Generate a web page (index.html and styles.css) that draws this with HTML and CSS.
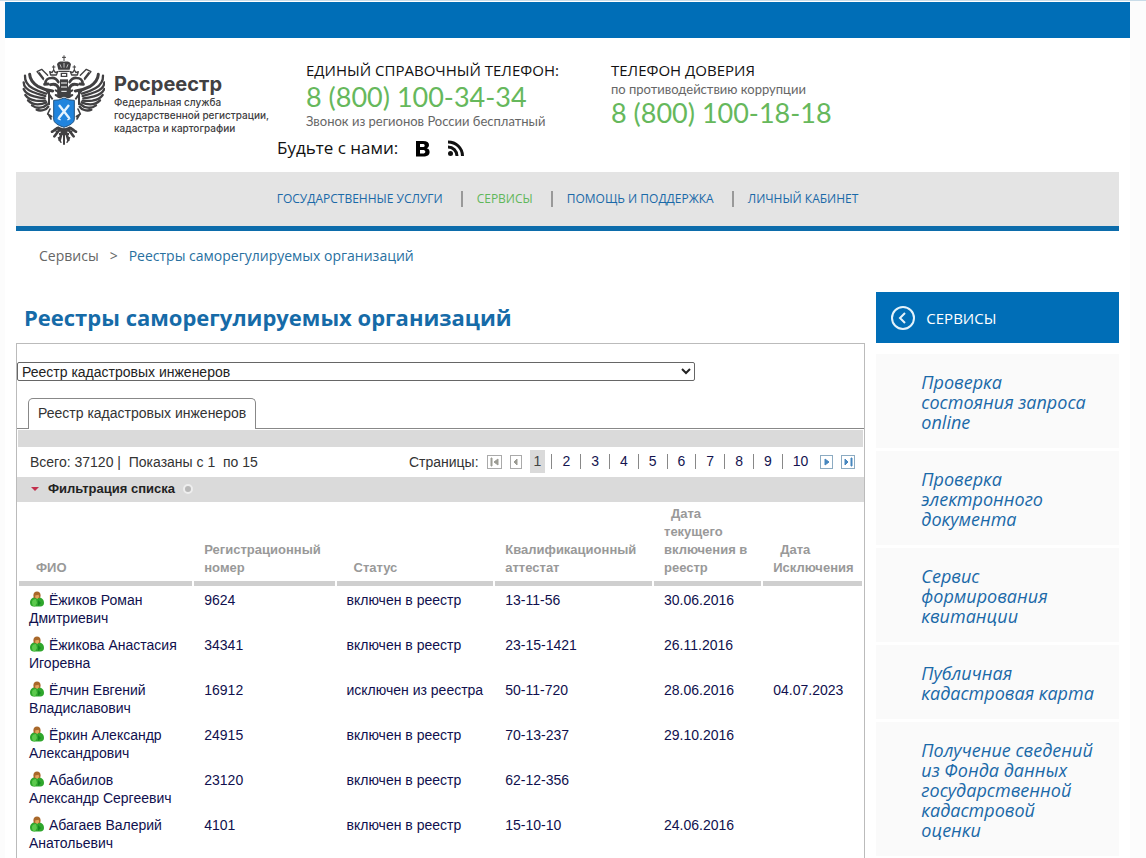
FILE: index.html
```html
<!DOCTYPE html>
<html lang="ru">
<head>
    <meta charset="UTF-8">
    <meta name="viewport" content="width=device-width, initial-scale=1.0">
    <title>Реестры саморегулируемых организаций</title>
    <link rel="stylesheet" href="styles.css">
</head>
<body>
    <!-- shared icons -->
    <svg class="sprite" aria-hidden="true">
        <defs>
            <symbol id="person" viewBox="0 0 16 16">
                <path d="M1 11.5C1 8 3.500 6 8 6s7 2.500 7 6c0 2-1.500 3.500-3.500 3.500h-7C2.500 15.500 1 14 1 11.500z" fill="#2fa62c"/>
                <path d="M3 11c0-2 2-3 4-3l1 4-2 3.500H5C3.500 15 3 13 3 11z" fill="#5cc94d"/>
                <path d="M9 9l3 3-3 3z" fill="#168a20"/>
                <path d="M8 .5c2.200 0 3.600 1.600 3.600 3.800 0 1.700-.4 2.400-1 3.200L8.500 6 5.500 7.500C4.700 6.600 4.400 5.800 4.400 4.300 4.400 2.100 5.800.5 8 .5z" fill="#a9682a"/>
                <path d="M6.200 4.500l3.400-.7.600 2.200L8.300 8 6.300 6.800z" fill="#e3a45c"/>
            </symbol>
            <g id="wing" fill="none" stroke="#414042" stroke-linecap="round" stroke-linejoin="round">
                <path d="M41 73c1 17 13 29 26 37 13 7 26 12 43 13" stroke-width="9"/>
                <path d="M27 77c-1 17 9 30 23 38 12 7 23 12 40 16" stroke-width="7"/>
                <path d="M23 97c0 14 11 23 27 29 13 5 24 8 38 12" stroke-width="7"/>
                <path d="M23 117c5 12 15 18 31 22 11 3 21 5 32 6" stroke-width="7"/>
                <path d="M28 135c7 10 18 15 31 17 11 1 20 1 29 0" stroke-width="7"/>
                <path d="M36 151c8 8 18 12 29 12 10 0 18-2 26-6" stroke-width="7"/>
                <path d="M48 166c8 6 15 8 24 7 9-1 16-4 22-10" stroke-width="7"/>
                <path d="M62 179c8 4 14 3 21 1 7-2 11-5 14-10" stroke-width="7"/>
                <path d="M91 121l18 26M99 125v38" stroke-width="6"/>
                <path d="M82 89L63 65l14-7 18 18M70 68l13 17" stroke-width="4"/>
                <path d="M88 101c0-10 8-17 18-17 10-1 17 5 21 12" stroke-width="8"/>
                <path d="M86 103l10-1M104 104c12-4 20 1 24 10v25" stroke-width="9"/>
                <path d="M119 121l22 13M119 135l22 12" stroke-width="6"/>
                <path d="M104 75h17l4-10-7 3-5-8-5 8-7-3z" stroke-width="4"/>
                <path d="M113 47v12M109 51h8" stroke-width="3"/>
                <path d="M102 177l-7 15 13 8M97 193l8 14" stroke-width="5"/>
                <path d="M129 233c-9 2-14 9-21 12M137 234c-9 5-15 18-22 25M143 237c-5 7-8 19-12 33" stroke-width="8"/>
                <path d="M115 238l10 10M127 263l8 14" stroke-width="4"/>
            </g>
        </defs>
    </svg>

    <div class="page">
        <div class="top-bar"></div>

        <header class="header">
            <a class="logo" href="#">
                <svg class="emblem" viewBox="15 12 252 276" aria-hidden="true">
                    <use href="#wing"/>
                    <use href="#wing" transform="translate(288 0) scale(-1 1)"/>
                    <path d="M144 16v17M138 22h12" stroke="#414042" stroke-width="3"/>
                    <path d="M127 59l-4-16c2-9 14-9 21-8 7-1 19-1 21 8l-4 16z" fill="#414042"/>
                    <path d="M132 43l4 10M144 39v14M156 43l-4 10" stroke="#fff" stroke-width="2"/>
                    <path d="M127 64h34M136 70h16v9h-16z" stroke="#414042" stroke-width="4" fill="none"/>
                    <path d="M132 88h24v58h-24z" fill="#414042"/>
                    <path d="M135 99h18M135 111h18M136 124h16" stroke="#fff" stroke-width="3"/>
                    <path d="M113 151q16 1 31-7 15 8 31 7v58q-1 13-31 23-30-10-31-23z" fill="#247fd7" stroke="#fff" stroke-width="7"/>
                    <path d="M113 151q16 1 31-7 15 8 31 7v58q-1 13-31 23-30-10-31-23z" fill="#2184dd" stroke="#25547f" stroke-width="3"/>
                    <path d="M129 165l31 40M159 165l-31 40" stroke="#e6f4ff" stroke-width="7"/>
                    <path d="M125 205l9 5M154 210l9-5" stroke="#e6f4ff" stroke-width="4"/>
                    <path d="M144 235v49M131 242h26M129 252h30" stroke="#414042" stroke-width="6"/>
                </svg>
                <span class="logo-text">
                    <strong>Росреестр</strong>
                    <span>Федеральная служба<br>государственной регистрации,<br>кадастра и картографии</span>
                </span>
            </a>
            <div class="contacts">
                <div class="phones">
                    <div class="phone">
                        <span class="phone-title">ЕДИНЫЙ СПРАВОЧНЫЙ ТЕЛЕФОН:</span>
                        <span class="phone-number">8 (800) 100-34-34</span>
                        <span class="phone-note">Звонок из регионов России бесплатный</span>
                    </div>
                    <div class="phone">
                        <span class="phone-title">ТЕЛЕФОН ДОВЕРИЯ</span>
                        <span class="phone-note">по противодействию коррупции</span>
                        <span class="phone-number">8 (800) 100-18-18</span>
                    </div>
                </div>
                <div class="social">
                    <span>Будьте с нами:</span>
                    <a href="#" aria-label="ВКонтакте">
                        <svg width="15" height="17" viewBox="0 0 15 17"><path fill-rule="evenodd" d="M1 1h7c4 0 6 1.400 6 4 0 1.500-.8 2.600-2.300 3.200C13.600 8.700 14.600 10 14.600 12c0 3-2.200 4.500-6.300 4.500H1zM5 4v3h2.500c1.400 0 2.200-.5 2.200-1.500S9 4 7.600 4zM5 10v3.500h2.800c1.600 0 2.500-.6 2.500-1.800S9.400 10 7.800 10z"/></svg>
                    </a>
                    <a href="#" aria-label="RSS">
                        <svg width="18" height="17" viewBox="0 0 18 17" fill="none" stroke="#111" stroke-width="3"><circle cx="3.500" cy="13.500" r="2.500" fill="#111" stroke="none"/><path d="M1 7c5 0 9 4 9 9M1 2c8 0 14.500 6 14.500 14"/></svg>
                    </a>
                </div>
            </div>
        </header>

        <nav class="nav">
            <a href="#">ГОСУДАРСТВЕННЫЕ УСЛУГИ</a>
            <a href="#" class="active">СЕРВИСЫ</a>
            <a href="#">ПОМОЩЬ И ПОДДЕРЖКА</a>
            <a href="#">ЛИЧНЫЙ КАБИНЕТ</a>
        </nav>

        <div class="breadcrumbs">
            <a href="#">Сервисы</a>
            <span>&gt;</span>
            <a href="#" class="current">Реестры саморегулируемых организаций</a>
        </div>

        <div class="content">
            <main class="main">
                <h1>Реестры саморегулируемых организаций</h1>
                <div class="registry">
                    <select class="registry-select" aria-label="Реестр">
                        <option>Реестр кадастровых инженеров</option>
                    </select>

                    <div class="tabs">
                        <button type="button" class="tab">Реестр кадастровых инженеров</button>
                    </div>
                    <div class="strip"></div>

                    <div class="list-info">
                        <span>Всего: 37120 |&nbsp; Показаны с 1&nbsp; по 15</span>
                        <div class="pager">
                            <span class="pager-label">Страницы:</span>
                            <button type="button" class="arrow" aria-label="Первая страница" disabled><svg width="15" height="14" viewBox="0 0 15 14"><path d="M4 3v8h1V3zM11 4v6L7 7z"/></svg></button>
                            <button type="button" class="arrow" aria-label="Предыдущая страница" disabled><svg width="12" height="14" viewBox="0 0 12 14"><path d="M7 4v6L4 7z"/></svg></button>
                            <div class="pages">
                                <a href="#" class="selected">1</a>
                                <a href="#">2</a>
                                <a href="#">3</a>
                                <a href="#">4</a>
                                <a href="#">5</a>
                                <a href="#">6</a>
                                <a href="#">7</a>
                                <a href="#">8</a>
                                <a href="#">9</a>
                                <a href="#">10</a>
                            </div>
                            <button type="button" class="arrow" aria-label="Следующая страница"><svg width="13" height="14" viewBox="0 0 13 14"><path d="M5 4v6l4-3z"/></svg></button>
                            <button type="button" class="arrow" aria-label="Последняя страница"><svg width="14" height="14" viewBox="0 0 14 14"><path d="M4 4v6l3-3zM10 3v8h1V3z"/></svg></button>
                        </div>
                    </div>

                    <button type="button" class="filter">
                        <span class="filter-arrow"></span>
                        Фильтрация списка
                        <span class="filter-dot"></span>
                    </button>

                    <table class="engineers">
                        <colgroup>
                            <col class="col-name">
                            <col class="col-number">
                            <col class="col-status">
                            <col class="col-cert">
                            <col class="col-date">
                            <col class="col-end">
                        </colgroup>
                        <thead>
                            <tr>
                                <th class="sortable">ФИО</th>
                                <th>Регистрационный номер</th>
                                <th class="sortable">Статус</th>
                                <th>Квалификационный аттестат</th>
                                <th class="sortable">Дата текущего включения в реестр</th>
                                <th class="sortable">Дата Исключения</th>
                            </tr>
                        </thead>
                        <tbody>
                            <tr>
                                <td><svg class="person"><use href="#person"/></svg> Ёжиков Роман Дмитриевич</td>
                                <td>9624</td>
                                <td>включен в реестр</td>
                                <td>13-11-56</td>
                                <td>30.06.2016</td>
                                <td></td>
                            </tr>
                            <tr>
                                <td><svg class="person"><use href="#person"/></svg> Ёжикова Анастасия Игоревна</td>
                                <td>34341</td>
                                <td>включен в реестр</td>
                                <td>23-15-1421</td>
                                <td>26.11.2016</td>
                                <td></td>
                            </tr>
                            <tr>
                                <td><svg class="person"><use href="#person"/></svg> Ёлчин Евгений Владиславович</td>
                                <td>16912</td>
                                <td>исключен из реестра</td>
                                <td>50-11-720</td>
                                <td>28.06.2016</td>
                                <td>04.07.2023</td>
                            </tr>
                            <tr>
                                <td><svg class="person"><use href="#person"/></svg> Ёркин Александр Александрович</td>
                                <td>24915</td>
                                <td>включен в реестр</td>
                                <td>70-13-237</td>
                                <td>29.10.2016</td>
                                <td></td>
                            </tr>
                            <tr>
                                <td><svg class="person"><use href="#person"/></svg> Абабилов Александр Сергеевич</td>
                                <td>23120</td>
                                <td>включен в реестр</td>
                                <td>62-12-356</td>
                                <td></td>
                                <td></td>
                            </tr>
                            <tr>
                                <td><svg class="person"><use href="#person"/></svg> Абагаев Валерий Анатольевич</td>
                                <td>4101</td>
                                <td>включен в реестр</td>
                                <td>15-10-10</td>
                                <td>24.06.2016</td>
                                <td></td>
                            </tr>
                        </tbody>
                    </table>
                </div>
            </main>

            <aside class="sidebar">
                <a class="sidebar-title" href="#">
                    <svg width="24" height="24" viewBox="0 0 24 24" fill="none" stroke="#e4f3fb" stroke-width="2"><circle cx="12" cy="12" r="11"/><path d="M14 7l-5 5 5 5"/></svg>
                    СЕРВИСЫ
                </a>
                <a class="sidebar-item" href="#">Проверка состояния запроса online</a>
                <a class="sidebar-item" href="#">Проверка электронного документа</a>
                <a class="sidebar-item" href="#">Сервис формирования квитанции</a>
                <a class="sidebar-item" href="#">Публичная кадастровая карта</a>
                <a class="sidebar-item" href="#">Получение сведений из Фонда данных государственной кадастровой оценки</a>
            </aside>
        </div>
    </div>
</body>
</html>
```
FILE: styles.css
```css
* {
    box-sizing: border-box;
}

body {
    margin: 0;
    padding: 0 16px 0 5px;
    background: #fcfcfc;
    border-top: 1px solid #c9dce8;
    font-family: "Open Sans", "Noto Sans", sans-serif;
    color: #111;
    overflow: hidden;
    height: 100vh;
}

a {
    color: #1a69a8;
    text-decoration: none;
}

button {
    font: inherit;
    color: inherit;
    cursor: pointer;
}

.sprite {
    position: absolute;
    width: 0;
    height: 0;
}

.page {
    background: #fff;
    padding-top: 1px;
}

.top-bar {
    height: 36px;
    background: #006eb7;
}

/* Header */
.header {
    display: flex;
    height: 134px;
    padding: 16px 16px 0;
}

.logo {
    display: flex;
    width: 256px;
    color: #414042;
}

.emblem {
    width: 84px;
    height: 92px;
    flex: none;
}

.logo-text {
    padding: 18px 0 0 9px;
    font: 500 10px/13px Inter, sans-serif;
    white-space: nowrap;
}

.logo-text strong {
    display: block;
    font-size: 20px;
    line-height: 24px;
}

.phones {
    display: flex;
    gap: 44px;
    padding: 6px 0 0 29px;
}

.phone {
    display: flex;
    flex-direction: column;
    align-items: flex-start;
}

.phone-title {
    font-size: 15px;
    line-height: 21px;
}

.phone:first-child {
    width: 261px;
}

.phone-number {
    font: 27px/32px Lato, sans-serif;
    color: #66b85c;
}

.phone-note {
    font: 13px/16px Lato, sans-serif;
    color: #666;
}

.social {
    display: flex;
    align-items: center;
    margin-top: 5px;
    font-size: 17px;
    line-height: 28px;
}

.social a {
    display: flex;
    margin-left: 17px;
}

/* Menu */
.nav {
    display: flex;
    justify-content: center;
    align-items: center;
    height: 59px;
    margin: 0 11px;
    background: #e4e4e4;
    border-bottom: 5px solid #0c6cab;
    font-size: 12px;
    line-height: 16px;
}

.nav a + a {
    margin-left: 18px;
    padding-left: 14px;
    border-left: 2px solid #999;
}

.nav .active {
    color: #5fb75a;
}

.breadcrumbs {
    display: flex;
    gap: 11px;
    padding: 14px 34px;
    font-size: 14px;
    line-height: 22px;
    color: #666;
}

.breadcrumbs a {
    color: #666;
}

.breadcrumbs .current {
    color: #28709f;
}

.content {
    display: grid;
    grid-template-columns: 7fr 2fr;
    gap: 11px;
    padding: 11px 11px 0;
}

/* Registry */
h1 {
    margin: 0;
    padding: 9px 8px;
    font-size: 22px;
    line-height: 33px;
    color: #166ba8;
}

.registry {
    border: 1px solid #bbb;
    border-bottom: none;
    font: 14px/18px "Liberation Sans", Arial, sans-serif;
    color: #333;
}

.registry-select {
    display: block;
    width: 80%;
    height: 19px;
    margin-top: 18px;
    padding: 0;
    border: 1px solid #666;
    border-radius: 2px;
    background: #fff;
    font: inherit;
    color: #222;
}

.tabs {
    display: flex;
    margin-top: 17px;
    padding-left: 11px;
    border-bottom: 1px solid #888;
}

.tab {
    height: 31px;
    margin-bottom: -1px;
    padding: 0 9px 2px;
    background: #fff;
    border: 1px solid #888;
    border-bottom: none;
    border-radius: 5px 5px 0 0;
}

.strip {
    height: 17px;
    margin: 1px 1px 0;
    background: #dadada;
}

.list-info {
    display: flex;
    justify-content: space-between;
    align-items: center;
    height: 30px;
    padding: 0 9px 1px 13px;
}

.pager {
    display: flex;
    align-items: center;
}

.arrow {
    display: flex;
    margin-left: 8px;
    padding: 0;
    border: 1px solid #8cabc2;
    background: #fff;
}

.arrow svg {
    margin: -1px;
    fill: #4686be;
    stroke: #4686be;
}

.arrow:disabled {
    border-color: #aaa;
}

.arrow:disabled svg {
    fill: #9b9b93;
    stroke: #9b9b93;
}

.pages {
    display: flex;
    margin-left: 8px;
}

.pages a {
    position: relative;
    margin-right: 13px;
    padding: 0 4px;
    line-height: 23px;
    color: #141450;
}

.pages a:last-child {
    margin-right: 0;
}

.pages a + a::before {
    content: "";
    position: absolute;
    left: -7px;
    top: 4px;
    height: 15px;
    border-left: 1px solid #888;
}

.pages .selected {
    background: #dadada;
    color: #444;
}

.filter {
    display: flex;
    align-items: center;
    width: 100%;
    height: 25px;
    padding: 0 14px 2px;
    border: none;
    background: #dadada;
    font-weight: bold;
    font-size: 13px;
    color: #222;
}

.filter-arrow {
    margin-right: 9px;
    border: 4px solid transparent;
    border-top-color: #c22f4c;
    border-bottom: none;
}

.filter-dot {
    width: 10px;
    height: 10px;
    margin-left: 8px;
    border: 2px solid #eee;
    border-radius: 50%;
    background: #b8b8b8;
}

.engineers {
    width: 100%;
    table-layout: fixed;
    border-collapse: separate;
    border-spacing: 2px;
}

.col-name {
    width: 21%;
}

.col-number {
    width: 17%;
}

.col-status {
    width: 19%;
}

.col-cert {
    width: 19%;
}

.col-date {
    width: 13%;
}

.col-end {
    width: 12%;
}

.engineers th {
    padding: 1px 0 4px 10px;
    border-bottom: 5px solid #cfcfcf;
    text-align: left;
    vertical-align: bottom;
    font-size: 13px;
    color: #999;
}

.engineers .sortable {
    text-indent: 7px;
}

.engineers td {
    padding: 3px 9px 4px 10px;
    vertical-align: top;
    color: #10104e;
}

.engineers td:nth-child(3) {
    padding-right: 0;
}

.person {
    width: 16px;
    height: 16px;
    vertical-align: -2px;
}

/* Sidebar */
.sidebar-title {
    display: flex;
    align-items: center;
    gap: 11px;
    height: 51px;
    margin-bottom: 11px;
    padding-left: 15px;
    background: #006eb7;
    color: #fff;
    font-size: 15px;
}

.sidebar-item {
    display: block;
    margin-bottom: 3px;
    padding: 18px 21px 16px 45px;
    background: #fafafa;
    font-size: 18px;
    line-height: 20px;
    font-style: italic;
}
```
